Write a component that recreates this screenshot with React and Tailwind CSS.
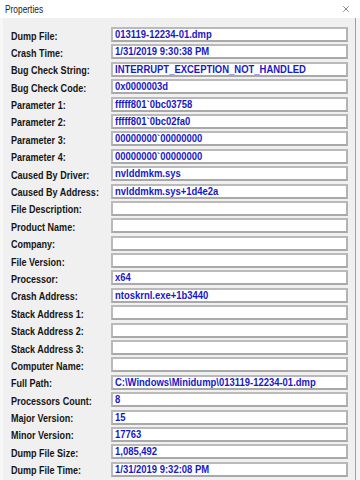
import { X } from 'lucide-react';

const rows = [
  ['Dump File:', '013119-12234-01.dmp'],
  ['Crash Time:', '1/31/2019 9:30:38 PM'],
  ['Bug Check String:', 'INTERRUPT_EXCEPTION_NOT_HANDLED'],
  ['Bug Check Code:', '0x0000003d'],
  ['Parameter 1:', 'fffff801`0bc03758'],
  ['Parameter 2:', 'fffff801`0bc02fa0'],
  ['Parameter 3:', '00000000`00000000'],
  ['Parameter 4:', '00000000`00000000'],
  ['Caused By Driver:', 'nvlddmkm.sys'],
  ['Caused By Address:', 'nvlddmkm.sys+1d4e2a'],
  ['File Description:', ''],
  ['Product Name:', ''],
  ['Company:', ''],
  ['File Version:', ''],
  ['Processor:', 'x64'],
  ['Crash Address:', 'ntoskrnl.exe+1b3440'],
  ['Stack Address 1:', ''],
  ['Stack Address 2:', ''],
  ['Stack Address 3:', ''],
  ['Computer Name:', ''],
  ['Full Path:', 'C:\\Windows\\Minidump\\013119-12234-01.dmp'],
  ['Processors Count:', '8'],
  ['Major Version:', '15'],
  ['Minor Version:', '17763'],
  ['Dump File Size:', '1,085,492'],
  ['Dump File Time:', '1/31/2019 9:32:08 PM'],
];

const Row = ({ label, value }) => (
  <div className="flex items-center h-[15px]">
    <div className="w-[108px] shrink-0 pl-[8px] overflow-visible whitespace-nowrap">
      <span className="inline-block origin-left scale-x-[0.82] text-[11px] leading-none font-bold text-[#151515]">
        {label}
      </span>
    </div>
    <div className="w-[237px] h-[15px] bg-white border-2 border-[#bababa] border-b-[#a9a9a9] border-r-[#b3b3b3] flex items-center pl-[2px] overflow-hidden whitespace-nowrap">
      <span className="inline-block origin-left scale-x-[0.86] text-[11px] leading-none font-bold text-[#1818c8]">
        {value}
      </span>
    </div>
  </div>
);

export default function App() {
  return (
    <div className="w-[360px] h-[480px] bg-white flex flex-col overflow-hidden font-['Liberation_Sans',Arial,sans-serif]">
      <div className="h-[18px] shrink-0 flex items-center justify-between pl-[5px] pr-[9px] bg-white">
        <span className="inline-block origin-left scale-x-[0.76] text-[11px] text-[#222]">Properties</span>
        <X size={10} strokeWidth={1.5} className="text-[#444]" />
      </div>
      <div className="flex-1 flex">
        <div className="w-[3px] bg-[#f7f7f7]" />
        <div className="flex-1 bg-[#f0f0f0] pt-[9px] flex flex-col gap-[2.4px]">
          {rows.map(([label, value]) => (
            <Row key={label} label={label} value={value} />
          ))}
        </div>
        <div className="w-[1px] bg-[#a0a0a0]" />
        <div className="w-[4px] bg-[#f4f4f4]" />
      </div>
    </div>
  );
}
